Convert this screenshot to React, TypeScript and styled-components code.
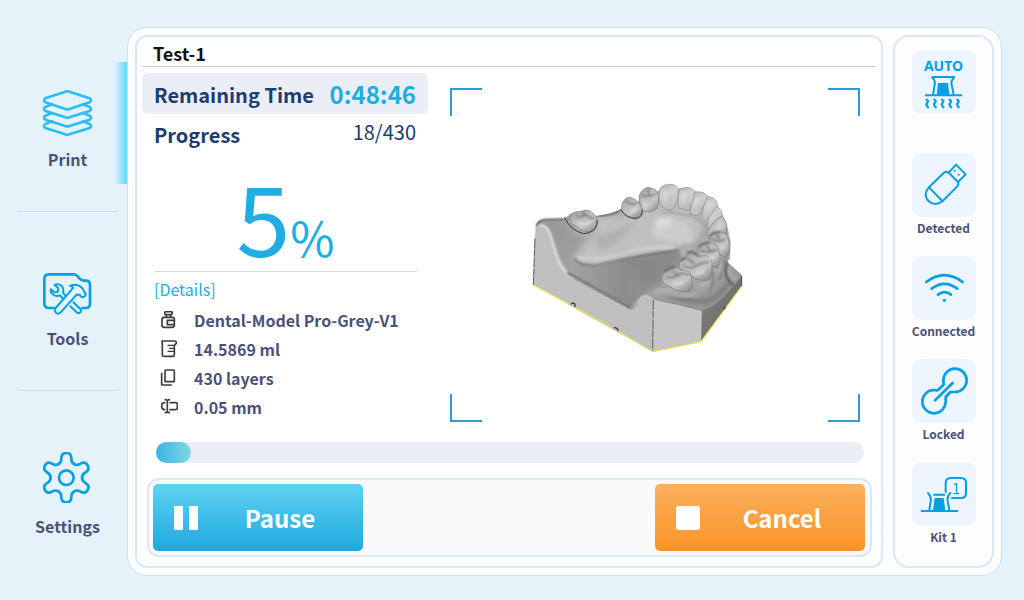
import React from "react";
import styled, { createGlobalStyle, css } from "styled-components";

const GlobalStyle = createGlobalStyle`
  *, *::before, *::after { box-sizing: border-box; }
  body {
    margin: 0;
    background: #e5f2fa;
    font-family: "Noto Sans CJK SC", "Noto Sans", sans-serif;
    color: #4b5179;
  }
`;

const Screen = styled.div`
  display: flex;
  min-height: 100vh;
  padding: 27px 22px 24px 0;
`;

/* ---------- navigation ---------- */

const Nav = styled.nav`
  flex: 0 0 127px;
  display: flex;
  flex-direction: column;
  padding-top: 35px;
`;

const NavLink = styled.a<{ $active?: boolean }>`
  display: flex;
  flex-direction: column;
  align-items: center;
  gap: 11px;
  padding: 28px 0 13px 8px;
  color: inherit;
  text-decoration: none;
  font-size: 16px;
  font-weight: 700;
  line-height: 24px;
  ${(p) =>
    p.$active &&
    css`
      background: linear-gradient(90deg, rgba(95, 214, 253, 0), #5fd6fd) right / 13px 100% no-repeat;
    `}
`;

const NavDivider = styled.hr`
  width: 100px;
  height: 1px;
  margin: 27px 0 33px 18px;
  border: 0;
  background: #c8dfee;
`;

/* ---------- panels ---------- */

const Frame = styled.div`
  flex: 1;
  min-width: 0;
  display: flex;
  gap: 10px;
  padding: 7px;
  border: 1px solid #c5e3f5;
  border-radius: 20px;
  background: #fdfdfe;
`;

const JobPanel = styled.main`
  flex: 1;
  min-width: 0;
  display: flex;
  flex-direction: column;
  padding: 0 5px 9px;
  border: 2px solid #d6e8f9;
  border-radius: 12px;
  background: #ffffff;
`;

const JobTitle = styled.h1`
  margin: 0;
  padding: 3px 11px 0;
  border-bottom: 1px solid #cbcbcd;
  color: #111111;
  font-size: 18px;
  font-weight: 700;
  line-height: 26px;
`;

const JobBody = styled.div`
  flex: 1;
  display: flex;
  gap: 22px;
  padding: 6px 16px 20px 0;
`;

const Summary = styled.section`
  flex: 0 0 286px;
`;

const SummaryRow = styled.div<{ $filled?: boolean }>`
  display: flex;
  align-items: center;
  justify-content: space-between;
  height: ${(p) => (p.$filled ? 41 : 39)}px;
  padding: 0 12px;
  border-radius: 6px;
  background: ${(p) => (p.$filled ? "#ebeef6" : "transparent")};
  color: #1c3d6e;
  font-size: 20px;
`;

const RowLabel = styled.span`
  font-weight: 700;
  padding-top: 2px;
`;

const TimeLeft = styled.span`
  color: #21ade1;
  font-size: 24px;
  font-weight: 700;
`;

const LayerCount = styled.span`
  padding-bottom: 4px;
`;

const Percent = styled.div`
  display: flex;
  justify-content: center;
  align-items: baseline;
  height: 119px;
  margin: 0 11px 0 12px;
  border-bottom: 1px solid #cbdfe9;
  color: #21ade1;
  font-size: 97px;
  line-height: 124px;
`;

const PercentSign = styled.span`
  font-size: 48px;
`;

const DetailsTitle = styled.h2`
  margin: 4px 12px 0;
  color: #21ade1;
  font-size: 16px;
  font-weight: 400;
  line-height: 26px;
`;

const DetailList = styled.ul`
  margin: 4px 0 0;
  padding: 0 18px;
  list-style: none;
`;

const DetailItem = styled.li`
  display: flex;
  align-items: center;
  gap: 16px;
  font-size: 16px;
  font-weight: 700;
  line-height: 29px;
`;

const Viewer = styled.figure`
  position: relative;
  flex: 1;
  display: flex;
  align-items: center;
  justify-content: center;
  margin: 15px 0 0;
`;

const Corner = styled.span<{ $v: "top" | "bottom"; $h: "left" | "right" }>`
  position: absolute;
  ${(p) => p.$v}: 0;
  ${(p) => p.$h}: 0;
  width: 32px;
  height: 28px;
  border: 0 solid #2f9ad8;
  border-${(p) => p.$v}-width: 2px;
  border-${(p) => p.$h}-width: 2px;
`;

const ProgressTrack = styled.div`
  height: 21px;
  margin: 0 12px 15px 14px;
  border-radius: 11px;
  background: #ebeef6;
`;

const ProgressFill = styled.div`
  height: 100%;
  border-radius: inherit;
  background: linear-gradient(90deg, #38b5e3, #7fd9e2);
`;

const ActionBar = styled.div`
  display: flex;
  justify-content: space-between;
  margin: 0 4px 0 5px;
  padding: 4px 5px 4px 4px;
  border: 2px solid #d6e8f9;
  border-radius: 12px;
  background: #fafafd;
`;

const ActionButton = styled.button<{ $tone: "blue" | "orange" }>`
  display: flex;
  align-items: center;
  width: 210px;
  height: 67px;
  padding: 0 20px;
  border: 0;
  border-radius: 5px;
  background: ${(p) =>
    p.$tone === "blue"
      ? "linear-gradient(#5fd2f2, #1fa9de)"
      : "linear-gradient(#fcb05c, #f99427)"};
  color: #ffffff;
  font-family: inherit;
  font-size: 24px;
  font-weight: 700;
  line-height: 36px;
`;

const ActionLabel = styled.span`
  flex: 1;
  padding-left: 18px;
  text-align: center;
`;

/* ---------- status column ---------- */

const StatusPanel = styled.aside`
  flex: 0 0 101px;
  display: flex;
  flex-direction: column;
  align-items: center;
  gap: 19px;
  padding-top: 13px;
  border: 2px solid #d6e8f9;
  border-radius: 16px;
`;

const StatusItem = styled.div`
  display: flex;
  flex-direction: column;
  align-items: center;
  gap: 2px;
  min-height: 84px;
  font-size: 12px;
  font-weight: 700;
  line-height: 18px;
`;

const StatusTile = styled.div`
  display: flex;
  flex-direction: column;
  align-items: center;
  width: 64px;
  height: 64px;
  border-radius: 9px;
  background: #edf5fe;
`;

const AutoText = styled.span`
  margin: 9px 0 2px;
  color: #05a0e4;
  font-family: "Noto Sans", sans-serif;
  font-size: 14px;
  line-height: 14px;
`;

/* ---------- icons ---------- */

type IconProps = { w: number; h: number; box: string; color?: string; stroke?: number; children: React.ReactNode };

const Icon = ({ w, h, box, color = "#05a0e4", stroke = 7, children }: IconProps) => (
  <svg width={w} height={h} viewBox={box} fill="none" stroke={color} strokeWidth={stroke}
    strokeLinecap="round" strokeLinejoin="round" aria-hidden="true">
    {children}
  </svg>
);

const PrintIcon = () => (
  <Icon w={51} h={46} box="126 209 153 138" color="#2bbdfb" stroke={8}>
    <path d="M196 214Q202 211 208 214L269 234Q277 240 269 246L208 266Q202 269 196 266L136 246Q128 240 136 234Z" />
    {[0, 26, 51].map((y) => (
      <path key={y} transform={`translate(0 ${y})`}
        d="M156 252L136 260Q128 266 136 272L196 291Q202 294 208 291L269 272Q277 266 269 260L249 252" />
    ))}
  </Icon>
);

const ToolsIcon = () => (
  <Icon w={50} h={42} box="129 98 150 126" stroke={8}>
    <path d="M161 203H146Q133 203 133 189V116Q133 102 146 102H221Q229 102 233 108L238 114Q243 121 252 121H257Q270 121 270 134V190Q270 203 257 203H247" />
    <g strokeWidth="6">
      <path d="M213 150L167 203Q162 211 168 217Q175 223 182 216L230 163" />
      <path d="M213 150L220 142Q215 137 210 137Q226 129 242 139Q251 145 252 154L257 160Q257 168 248 171Q241 169 240 164L230 163" />
      <path d="M187 173L180 165Q166 170 156 160Q150 153 153 147L163 156L173 155L175 144L164 134Q174 129 184 136Q193 145 189 157L196 165" />
      <path d="M211 198L230 216Q237 221 242 215Q245 210 240 205L220 186" />
    </g>
  </Icon>
);

const SettingsIcon = () => (
  <Icon w={50} h={51} box="128 639 150 153" stroke={8}>
    {[0, 60, 120, 180, 240, 300].map((a) => (
      <path key={a} transform={`rotate(${a} 198 716)`}
        d="M174.5 675C180 672 183 667 183 659C183 648 188 642 198 642C208 642 213 648 213 659C213 667 216 672 221.5 675" />
    ))}
    <circle cx="198" cy="716" r="22" />
  </Icon>
);

const HeaterIcon = () => (
  <Icon w={39} h={34} box="135 165 117 102" stroke={6}>
    <path d="M158 171H227" strokeLinecap="butt" />
    <path d="M160 173Q170 181 167 194L162 224M225 173Q215 181 218 194L224 224" />
    <path d="M177 189H207L211 224H173Z" fill="#05a0e4" stroke="none" />
    <path d="M138 226H249" strokeLinecap="butt" />
    {[0, 23, 46, 69, 92].map((x) => (
      <path key={x} transform={`translate(${x} 0)`} d="M143 239Q150 243 145 248Q139 253 147 262" strokeWidth="7" />
    ))}
  </Icon>
);

const UsbIcon = () => (
  <Icon w={64} h={64} box="96 399 192 192" stroke={6}>
    <path d="M147 502L190 460Q198 452 207 459L235 487Q237 493 231 500L188 543Q171 558 152 548Q130 533 140 511Z" />
    <path d="M147 502L187 543M206 458L228 434L257 463L234 486" />
    <path d="M224 452h.1M236 464h.1" />
  </Icon>
);

const WifiIcon = () => (
  <Icon w={64} h={64} box="96 48 192 192" stroke={8}>
    <path d="M139 126Q193 85 248 126M155 146Q193 117 232 146M174 164Q193 149 213 164" />
    <circle cx="193" cy="181" r="5" fill="#05a0e4" stroke="none" />
  </Icon>
);

const LinkIcon = () => (
  <Icon w={64} h={64} box="96 357 192 192" stroke={8}>
    <path d="M191 434L190 421A35 35 0 1 1 226 456L211 456L197 471V484A35 35 0 1 1 161 450L173 451Z" />
    <path d="M165 481L218 429" />
  </Icon>
);

const KitIcon = () => (
  <Icon w={64} h={64} box="96 96 192 192" stroke={6}>
    <path d="M197 186V159Q197 144 212 144H243Q258 144 258 159V189Q258 204 243 204H216" />
    <text x="228" y="192" fill="#05a0e4" stroke="none" fontSize="44" fontWeight="400" textAnchor="middle">1</text>
    <path d="M160 194H195M123 243H234" strokeLinecap="butt" />
    <path d="M144 189Q155 200 152 214L148 240M211 189Q200 200 203 214L208 240" />
    <path d="M164 204H191L196 242H159Z" fill="#05a0e4" stroke="none" />
  </Icon>
);

const ink = "#3d3d40";

const BottleIcon = () => (
  <Icon w={18} h={19} box="90 153 54 57" color={ink} stroke={5}>
    <rect x="104" y="155" width="23" height="9" rx="4" />
    <path d="M109 165V171M122 165V171" />
    <rect x="96" y="172" width="37" height="30" rx="6" />
    <path d="M133 181H112V194H133" />
  </Icon>
);

const BeakerIcon = () => (
  <Icon w={18} h={19} box="90 240 54 57" color={ink} stroke={5}>
    <path d="M96 243H133Q140 243 139 250L133 256V284Q133 289 127 289H103Q97 289 97 284V249Z" />
    <path d="M114 256H132M119 265H132M114 274H132" strokeWidth="4" />
  </Icon>
);

const LayersIcon = () => (
  <Icon w={18} h={19} box="90 327 54 57" color={ink} stroke={5}>
    <rect x="105" y="330" width="28" height="35" rx="2" />
    <path d="M95 340V375H124" />
  </Icon>
);

const ThicknessIcon = () => (
  <Icon w={18} h={19} box="90 414 54 57" color={ink} stroke={5}>
    <path d="M106 419Q112 419 112 424Q112 419 118 419M112 422V454M106 458Q112 458 112 453Q112 458 118 458" />
    <path d="M104 428Q95 428 95 438.500Q95 449 104 449M120 428H137Q142 428 142 433V444Q142 449 137 449H120" />
  </Icon>
);

const PauseIcon = () => (
  <svg width="26" height="24" viewBox="0 0 26 24" fill="#ffffff" aria-hidden="true">
    <rect x="1" width="9" height="24" rx="1" />
    <rect x="16" width="9" height="24" rx="1" />
  </svg>
);

const StopIcon = () => (
  <svg width="26" height="24" viewBox="0 0 26 24" fill="#ffffff" aria-hidden="true">
    <rect x="1" width="24" height="24" rx="3" />
  </svg>
);

/* ---------- dental model preview ---------- */

const frontTeeth = [
  "M562 170Q568 124 580 108Q602 108 608 136Q596 152 574 180Z",
  "M546 146Q550 95 562 79Q592 84 592 106Q580 132 554 154Z",
  "M511 134Q514 80 522 66Q556 62 562 80Q552 112 534 138Q520 132 511 134Z",
  "M476 114Q472 70 480 56Q512 46 524 64Q520 100 505 122Q488 116 476 114Z",
  "M417 72Q418 48 440 43Q468 41 475 56Q477 96 460 116Q446 126 430 112Q417 96 417 72Z",
];

const leftTeeth = [
  "M358 78Q362 60 380 53Q404 51 416 74Q418 98 410 116Q388 132 368 120Q356 100 358 78Z",
  "M304 112Q308 86 326 82Q346 84 356 100Q372 116 364 138Q340 150 316 134Q302 124 304 112Z",
  "M150 134Q166 122 186 124Q198 116 212 124Q232 138 232 158Q228 180 210 186Q186 186 166 168Q146 158 150 134Z",
];

const rightTeeth = [
  "M558 196Q576 152 606 138Q622 152 620 190Q606 206 582 200Z",
  "M566 204Q572 186 594 186Q618 184 624 206Q634 236 622 262Q604 262 586 240Q562 222 566 204Z",
  "M531 240Q538 220 566 218Q594 220 598 246Q606 274 592 294Q574 292 556 268Q530 254 531 240Z",
  "M479 276Q488 266 497 264Q500 246 516 246Q530 252 534 262Q562 250 572 266Q582 292 570 328Q548 336 524 324Q504 306 482 298Q474 286 479 276Z",
  "M426 320Q434 300 450 300Q456 288 470 292Q484 302 490 300Q512 302 514 322Q520 350 508 364Q480 370 450 350Q424 342 426 320Z",
];

const ModelPreview = () => (
  <svg width="410" height="334" viewBox="-210 -246 1230 1002" role="img" aria-label="Dental model preview">
    <defs>
      <linearGradient id="gum" x1="0" y1="0" x2="1" y2="1">
        <stop offset="0" stopColor="#858585" />
        <stop offset=".4" stopColor="#bcbcbc" />
        <stop offset=".75" stopColor="#a9a9a9" />
        <stop offset="1" stopColor="#6b6b6b" />
      </linearGradient>
      <linearGradient id="floor" x1="0" y1="0" x2="1" y2="0">
        <stop offset="0" stopColor="#a6a6a6" />
        <stop offset=".5" stopColor="#8c8c8c" />
        <stop offset="1" stopColor="#959595" />
      </linearGradient>
      <linearGradient id="side" x1="0" y1="0" x2="1" y2="1">
        <stop offset="0" stopColor="#868686" />
        <stop offset="1" stopColor="#606060" />
      </linearGradient>
      <linearGradient id="enamel" x1=".2" y1="0" x2=".5" y2="1">
        <stop offset="0" stopColor="#b8b8b8" />
        <stop offset=".35" stopColor="#d0d0d0" />
        <stop offset="1" stopColor="#bababa" />
      </linearGradient>
      <linearGradient id="molar" x1="0" y1="0" x2=".8" y2="1">
        <stop offset="0" stopColor="#9a9a9a" />
        <stop offset=".4" stopColor="#bcbcbc" />
        <stop offset=".7" stopColor="#c6c6c6" />
        <stop offset="1" stopColor="#929292" />
      </linearGradient>
      <filter id="soft" x="-30%" y="-30%" width="160%" height="160%">
        <feGaussianBlur stdDeviation="8" />
      </filter>
      <filter id="fine" x="-20%" y="-20%" width="140%" height="140%">
        <feGaussianBlur stdDeviation="2.500" />
      </filter>
      <clipPath id="top">
        <path d="M47 166Q52 150 70 148L130 146L150 134L232 137Q270 134 302 118L360 90L418 60L474 54L540 68L592 106L620 160L632 215L630 265L622 276L665 315C640 350 600 415 545 422L400 388Q385 372 368 378C350 388 350 418 330 418L140 312C100 270 105 200 80 172Q60 160 47 172Z" />
      </clipPath>
    </defs>

    <path fill="url(#gum)" d="M47 166Q52 150 70 148L130 146L150 134L232 137Q270 134 302 118L360 90L418 60L474 54L540 68L592 106L620 160L632 215L630 265L622 276L665 315C640 350 600 415 545 422L400 388Q385 372 368 378C350 388 350 418 330 418L140 312C100 270 105 200 80 172Q60 160 47 172Z" />

    <g clipPath="url(#top)">
      <path d="M50 168Q90 140 130 150Q150 200 200 200Q180 230 158 262Q162 290 200 300L140 312Q100 240 80 172Z" fill="#969696" filter="url(#soft)" opacity=".75" />
      <path d="M235 140Q300 150 400 125L500 120Q560 150 540 220L470 240Q330 240 230 275Q180 270 200 230Q230 200 235 140Z" fill="#c0c0c0" filter="url(#soft)" />
      <path d="M395 175Q430 130 500 160Q530 190 510 240Q480 215 400 205Z" fill="#cdcdcd" filter="url(#soft)" />
      <path d="M405 150Q435 140 462 150Q440 172 412 172Z" fill="#dfdfdf" filter="url(#soft)" />
      <path d="M220 200Q270 190 350 150Q310 215 240 245Z" fill="#a9a9a9" filter="url(#soft)" opacity=".6" />
      <path d="M165 268Q190 292 240 284Q330 262 400 250L476 238Q482 250 484 262L478 290Q430 295 425 320Q440 350 390 366Q350 378 334 416L140 312Z" fill="url(#floor)" filter="url(#fine)" />
      <path d="M320 275L472 244L470 280Q430 290 424 322Q400 340 370 352Q350 300 320 275Z" fill="#858585" filter="url(#soft)" opacity=".7" />
      <path d="M172 262Q240 278 330 244Q400 226 462 232" stroke="#cbcbcb" strokeWidth="14" fill="none" filter="url(#fine)" />
      <path d="M164 264Q172 288 230 286Q320 262 478 240" stroke="#696969" strokeWidth="4" fill="none" filter="url(#fine)" />
      <path d="M478 238Q500 220 520 232L545 205Q560 185 575 160" stroke="#a0a0a0" strokeWidth="12" fill="none" filter="url(#soft)" />
      <path d="M380 372Q420 330 450 360Q520 380 580 330Q620 280 612 260L665 315Q620 400 545 422L400 388Z" fill="#9b9b9b" filter="url(#soft)" />
      <path d="M445 374Q500 396 560 394Q600 380 625 340" stroke="#6e6e6e" strokeWidth="12" fill="none" filter="url(#soft)" />
      <path d="M400 368Q430 350 460 372Q500 384 530 372" stroke="#bababa" strokeWidth="12" fill="none" filter="url(#soft)" />
      <path d="M535 350Q556 344 574 330M592 310Q602 296 608 280" stroke="#b8b8b8" strokeWidth="14" fill="none" filter="url(#soft)" />
      <path d="M622 276Q606 320 640 346" stroke="#646464" strokeWidth="9" fill="none" filter="url(#fine)" />
      <path d="M630 290Q620 320 650 325" stroke="#aaaaaa" strokeWidth="8" fill="none" filter="url(#fine)" />
      <path d="M576 300Q586 340 566 370M614 262Q612 300 598 330" stroke="#808080" strokeWidth="6" fill="none" filter="url(#fine)" />
      <path d="M144 310L330 414" stroke="#7c7c7c" strokeWidth="10" fill="none" filter="url(#fine)" />
      <path d="M300 120Q262 138 232 137" stroke="#6a6a6a" strokeWidth="8" fill="none" filter="url(#fine)" />
      <path d="M428 125Q480 130 520 140Q552 160 560 175" stroke="#989898" strokeWidth="4" fill="none" filter="url(#fine)" />
    </g>

    <path fill="#bfbfbf" d="M47 170Q66 160 80 172C105 200 100 275 140 312L330 418C350 418 350 388 368 377Q386 370 400 388L398 545L40 345L42 240Z" />
    <path d="M56 166Q72 164 82 176C104 206 102 272 140 308" stroke="#dedede" strokeWidth="7" fill="none" filter="url(#fine)" />
    <path fill="#c5c5c5" d="M400 387L545 422L543 515L398 545Z" />
    <path fill="url(#side)" d="M545 422C595 412 640 350 665 315V348L543 515Z" />
    <path d="M404 388Q470 402 545 421" stroke="#8c8c8c" strokeWidth="3" fill="none" />
    <path d="M50 166Q56 150 76 148L132 146" stroke="#515151" strokeWidth="4" fill="none" filter="url(#fine)" />
    <path d="M45 205L40 345M400 390L398 542" stroke="#5c5c5c" strokeWidth="3" strokeDasharray="30 3 22 3" fill="none" />
    <path d="M165 328L330 418Q346 418 352 400" stroke="#777777" strokeWidth="2" strokeDasharray="16 3" fill="none" />
    <path d="M665 318V348" stroke="#4a4a4a" strokeWidth="3" />

    <g stroke="#909090" strokeWidth="2" fill="url(#enamel)">
      {frontTeeth.map((d) => <path key={d} d={d} />)}
    </g>
    <g stroke="#7c7c7c" strokeWidth="2" fill="url(#molar)">
      {leftTeeth.map((d) => <path key={d} d={d} />)}
      {rightTeeth.map((d) => <path key={d} d={d} />)}
    </g>

    <g fill="none" stroke="#3d3d3d" strokeWidth="3">
      <path d="M134 142Q150 180 190 191Q232 190 232 150" />
      <path d="M302 118Q318 146 350 146Q370 138 366 120" />
    </g>
    <g fill="none" stroke="#6c6c6c" strokeWidth="4" filter="url(#fine)">
      <path d="M168 136Q184 148 196 132Q206 144 224 146M186 124L194 136" />
      <path d="M320 94Q332 108 350 100M364 76Q384 84 408 72M384 56L388 78" />
      <path d="M438 322Q466 326 482 310L510 314M458 304L476 318M488 288Q520 300 536 282L566 276M504 266L524 282" />
      <path d="M540 242Q562 250 590 240M572 208Q594 218 616 208M560 226L572 244M590 192L598 208" />
      <path d="M432 304Q450 292 466 292M480 272L498 262M500 250Q520 240 532 258M534 232Q548 218 566 218M568 198Q580 184 600 186" strokeWidth="6" />
    </g>
    <g fill="none" stroke="#dadada" strokeWidth="7" filter="url(#fine)">
      <path d="M174 158Q190 168 208 158M332 122Q344 126 350 116M374 96V112M436 58V92M492 66V100M532 84L526 108M570 96L562 124" />
      <path d="M458 338Q478 346 490 336M528 308Q546 314 554 300M566 262Q580 268 584 258M602 228L610 234M602 156L590 180" />
    </g>

    <path d="M40 345L154 405M166 411L282 474M294 482L398 545L543 515L665 349" stroke="#e6e34a" strokeWidth="3.500" fill="none" />
    <path d="M153 404Q156 396 165 402V411M281 474Q286 470 294 478V484M611 418L616 411" stroke="#333333" strokeWidth="3.500" fill="none" />
  </svg>
);

/* ---------- screen ---------- */

const details = [
  { icon: <BottleIcon />, text: "Dental-Model Pro-Grey-V1" },
  { icon: <BeakerIcon />, text: "14.5869 ml" },
  { icon: <LayersIcon />, text: "430 layers" },
  { icon: <ThicknessIcon />, text: "0.05 mm" },
];

const statuses = [
  { icon: <UsbIcon />, text: "Detected" },
  { icon: <WifiIcon />, text: "Connected" },
  { icon: <LinkIcon />, text: "Locked" },
  { icon: <KitIcon />, text: "Kit 1" },
];

export default function App() {
  const percent = 5;
  return (
    <>
      <GlobalStyle />
      <Screen>
        <Nav aria-label="Main">
          <NavLink href="#print" $active aria-current="page">
            <PrintIcon />
            Print
          </NavLink>
          <NavDivider />
          <NavLink href="#tools">
            <ToolsIcon />
            Tools
          </NavLink>
          <NavDivider />
          <NavLink href="#settings">
            <SettingsIcon />
            Settings
          </NavLink>
        </Nav>

        <Frame>
          <JobPanel>
            <JobTitle>Test-1</JobTitle>
            <JobBody>
              <Summary>
                <SummaryRow $filled>
                  <RowLabel>Remaining Time</RowLabel>
                  <TimeLeft>0:48:46</TimeLeft>
                </SummaryRow>
                <SummaryRow>
                  <RowLabel>Progress</RowLabel>
                  <LayerCount>18/430</LayerCount>
                </SummaryRow>
                <Percent>
                  {percent}
                  <PercentSign>%</PercentSign>
                </Percent>
                <DetailsTitle>[Details]</DetailsTitle>
                <DetailList>
                  {details.map((d) => (
                    <DetailItem key={d.text}>
                      {d.icon}
                      {d.text}
                    </DetailItem>
                  ))}
                </DetailList>
              </Summary>
              <Viewer>
                <ModelPreview />
                <Corner $v="top" $h="left" />
                <Corner $v="top" $h="right" />
                <Corner $v="bottom" $h="left" />
                <Corner $v="bottom" $h="right" />
              </Viewer>
            </JobBody>
            <ProgressTrack role="progressbar" aria-label="Print progress" aria-valuenow={percent} aria-valuemin={0} aria-valuemax={100}>
              <ProgressFill style={{ width: `${percent}%` }} />
            </ProgressTrack>
            <ActionBar>
              <ActionButton type="button" $tone="blue">
                <PauseIcon />
                <ActionLabel>Pause</ActionLabel>
              </ActionButton>
              <ActionButton type="button" $tone="orange">
                <StopIcon />
                <ActionLabel>Cancel</ActionLabel>
              </ActionButton>
            </ActionBar>
          </JobPanel>

          <StatusPanel aria-label="Device status">
            <StatusItem>
              <StatusTile>
                <AutoText>AUTO</AutoText>
                <HeaterIcon />
              </StatusTile>
            </StatusItem>
            {statuses.map((s) => (
              <StatusItem key={s.text}>
                <StatusTile>{s.icon}</StatusTile>
                {s.text}
              </StatusItem>
            ))}
          </StatusPanel>
        </Frame>
      </Screen>
    </>
  );
}
